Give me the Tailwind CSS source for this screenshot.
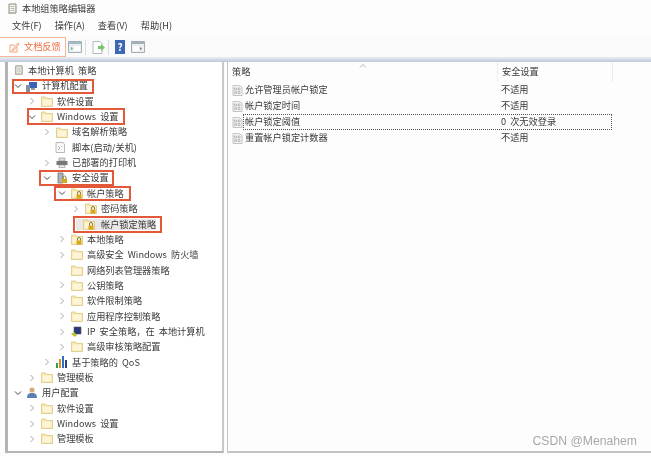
<!DOCTYPE html>
<html lang="zh-CN">
<head>
  <meta charset="UTF-8" />
  <title>本地组策略编辑器</title>
  <script src="https://cdn.jsdelivr.net/npm/@tailwindcss/browser@4"></script>
</head>
<body class="bg-white">
  <svg class="hidden">
    <symbol id="folder" viewBox="0 0 12 11">
      <path d="M.5 2.500V1h4l1 1.500h6v8H.5z" fill="#f8e6ab" stroke="#dcc680" stroke-width=".8"/>
      <path d="M1.500 3.500h9v6h-9z" fill="#fdf5d6"/>
    </symbol>
    <symbol id="lockfolder" viewBox="0 0 12 11">
      <path d="M.5 2.500V1h4l1 1.500h6v8H.5z" fill="#f8e6ab" stroke="#dcc680" stroke-width=".8"/>
      <path d="M1.500 3.500h9v6h-9z" fill="#fdf5d6"/>
      <path d="M5.500 6.500h5v4h-5z" fill="#d8a818"/>
      <path d="M6.500 6.500V5a1.500 1.500 0 0 1 3 0v1.500" fill="none" stroke="#8a7a3a"/>
    </symbol>
    <symbol id="right" viewBox="0 0 8 8">
      <path d="M2.500 1l3 3-3 3" fill="none" stroke="#a8a8a8" stroke-width="1"/>
    </symbol>
    <symbol id="down" viewBox="0 0 8 8">
      <path d="M1 2.500l3 3 3-3" fill="none" stroke="#444" stroke-width="1"/>
    </symbol>
    <symbol id="policy" viewBox="0 0 11 11">
      <path d="M1 .5h6l3 2v8H1z" fill="#f6f6f6" stroke="#b4b8bc" stroke-width=".8"/>
      <path d="M2.500 3h2v2h-2zM6 3h2v2H6zM2.500 6.500h2v2h-2zM6 6.500h2v2H6z" fill="none" stroke="#a4a8ac" stroke-width=".7"/>
    </symbol>
    <symbol id="doc" viewBox="0 0 12 12">
      <path d="M3 1h7v9H3z" fill="#f4f4ee" stroke="#8b8b80"/>
      <path d="M1 11h7l2-1H3z" fill="#b8b8a8"/>
      <path d="M4.500 3.500h4M4.500 5.500h4M4.500 7.500h4" stroke="#a0a090" stroke-width=".7"/>
    </symbol>
  </svg>

  <div class="h-[456px] w-[651px] overflow-hidden bg-[#fdfdfd] text-[9.2px] leading-none text-[#3a3a3a] blur-[0.3px] [word-spacing:2px] [font-family:'Noto_Sans_CJK_SC','Liberation_Sans',sans-serif]">
    <!-- title -->
    <div class="flex h-[18px] items-center gap-[4px] pl-[6px]">
      <svg class="h-[12px] w-[12px]"><use href="#doc"/></svg>
      <span>本地组策略编辑器</span>
    </div>
    <!-- menu -->
    <div class="flex h-[19px] items-center gap-[13px] pb-[3px] pl-[12px]">
      <span>文件(F)</span><span>操作(A)</span><span>查看(V)</span><span>帮助(H)</span>
    </div>
    <!-- toolbar -->
    <div class="flex h-[20px] items-center bg-[#fafafa]">
      <div class="flex h-[20px] w-[66px] items-center gap-[4px] border-y border-r border-[#f5b795] bg-white pl-[9px] text-[#ee6f42]">
        <svg class="h-[11px] w-[11px]" viewBox="0 0 11 11"><path d="M1 3h5M1 3v7h7V5M4 7l5-6 1 1-5 6-2 .5z" fill="none" stroke="#f19a72" stroke-width=".9"/></svg>
        <span>文档反馈</span>
      </div>
      <svg class="ml-[2px] h-[12px] w-[14px]" viewBox="0 0 14 12"><path d="M.5.5h13v11H.5z" fill="#e6eef2" stroke="#a2b0b8"/><path d="M1 1h12v2H1z" fill="#a6b9c6"/><path d="M6 5h6v5H6z" fill="#fff"/><path d="M3 6l2 1.500L3 9z" fill="#6cb56c"/></svg>
      <div class="ml-[3px] h-[15px] w-px bg-[#d8dcdf]"></div>
      <svg class="ml-[6px] h-[13px] w-[14px]" viewBox="0 0 14 13"><path d="M1 .5h7l2 2v10H1z" fill="#fff" stroke="#b4b9bc"/><path d="M6 5h3V3l4 3.500L9 10V8H6z" fill="#7cc26e"/></svg>
      <div class="ml-[2px] h-[15px] w-px bg-[#d8dcdf]"></div>
      <div class="ml-[6px] flex h-[14px] w-[10px] items-center justify-center bg-[#3b69b6] text-[10px] font-bold text-white">?</div>
      <svg class="ml-[6px] h-[12px] w-[14px]" viewBox="0 0 14 12"><path d="M.5.5h13v11H.5z" fill="#eceef0" stroke="#a2aeb6"/><path d="M1 1h12v2H1z" fill="#a4b0b8"/><path d="M2 5h6v5H2z" fill="#fff"/><path d="M9 6l2 1.500L9 9z" fill="#6a7a84"/></svg>
    </div>
    <!-- panes -->
    <div class="h-[5px] bg-gradient-to-b from-[#eceff3] to-[#b9c8da]"></div>
    <div class="flex h-[391px]">
      <!-- tree -->
      <div class="ml-[5px] h-full w-[219px] border-x-2 border-b-2 border-l-[3px] border-[#b4b4b4] border-r-[#c8c8c8] bg-white pt-[1px]">
        <div class="flex h-[15.35px] items-center pl-[5px]"><svg class="mr-[4px] h-[11px] w-[11px]"><use href="#doc"/></svg><span>本地计算机 策略</span></div>

        <div class="flex h-[15.35px] items-center pl-[6px]"><span class="relative flex items-center"><svg class="h-[8px] w-[8px]"><use href="#down"/></svg><svg class="ml-[4px] mr-[4px] h-[11px] w-[12px]" viewBox="0 0 12 11"><path d="M3 1h8v6H3z" fill="#3d62b8"/><path d="M5 7h4v2H5z" fill="#999"/><path d="M0 4h4v7H0z" fill="#8090a0"/></svg><span>计算机配置</span><span class="absolute -left-[2px] -right-[6px] -top-[2px] -bottom-[2px] border-2 border-[#e4583a]"></span></span></div>
        <div class="flex h-[15.35px] items-center pl-[20px]"><svg class="h-[8px] w-[8px]"><use href="#right"/></svg><svg class="ml-[5px] mr-[4px] h-[11px] w-[12px]"><use href="#folder"/></svg><span>软件设置</span></div>
        <div class="flex h-[15.35px] items-center pl-[20px]"><span class="relative flex items-center"><svg class="h-[8px] w-[8px]"><use href="#down"/></svg><svg class="ml-[5px] mr-[4px] h-[11px] w-[12px]"><use href="#folder"/></svg><span>Windows 设置</span><span class="absolute -left-[1px] -right-[6px] -top-[3px] -bottom-[3px] border-2 border-[#e4583a]"></span></span></div>

        <div class="flex h-[15.35px] items-center pl-[35px]"><svg class="h-[8px] w-[8px]"><use href="#right"/></svg><svg class="ml-[5px] mr-[4px] h-[11px] w-[12px]"><use href="#folder"/></svg><span>域名解析策略</span></div>
        <div class="flex h-[15.35px] items-center pl-[46px]"><svg class="mr-[6px] h-[11px] w-[12px]" viewBox="0 0 12 11"><path d="M2 .5h7l1.500 2v8H2z" fill="#f8f8f8" stroke="#a8a8a8" stroke-width=".8"/><path d="M4 4l2 2-2 2M7 4l1 1" fill="none" stroke="#a0a0a0" stroke-width=".8"/></svg><span>脚本(启动/关机)</span></div>
        <div class="flex h-[15.35px] items-center pl-[35px]"><svg class="h-[8px] w-[8px]"><use href="#right"/></svg><svg class="ml-[5px] mr-[4px] h-[11px] w-[12px]" viewBox="0 0 12 11"><path d="M3 1h6v3H3z" fill="#ddd" stroke="#888" stroke-width=".6"/><path d="M.5 4h11v4H.5z" fill="#777"/><path d="M3 8h6v2.500H3z" fill="#eee" stroke="#888" stroke-width=".6"/></svg><span>已部署的打印机</span></div>
        <div class="flex h-[15.35px] items-center pl-[35px]"><span class="relative flex items-center"><svg class="h-[8px] w-[8px]"><use href="#down"/></svg><svg class="ml-[5px] mr-[4px] h-[12px] w-[12px]" viewBox="0 0 12 12"><path d="M2 1h5v10H2z" fill="#aeb4ba" stroke="#666" stroke-width=".7"/><path d="M6 7h5v4H6z" fill="#d8a818"/><path d="M7 7V5.500a1.500 1.500 0 0 1 3 0V7" fill="none" stroke="#8a7a3a"/></svg><span>安全设置</span><span class="absolute -left-[4px] -right-[5px] -top-[2px] -bottom-[2px] border-2 border-[#e4583a]"></span></span></div>

        <div class="flex h-[15.35px] items-center pl-[50px]"><span class="relative flex items-center"><svg class="h-[8px] w-[8px]"><use href="#down"/></svg><svg class="ml-[5px] mr-[4px] h-[11px] w-[12px]"><use href="#lockfolder"/></svg><span>帐户策略</span><span class="absolute -left-[4px] -right-[7px] -top-[2px] -bottom-[2px] border-2 border-[#e4583a]"></span></span></div>
        <div class="flex h-[15.35px] items-center pl-[64px]"><svg class="h-[8px] w-[8px]"><use href="#right"/></svg><svg class="ml-[5px] mr-[4px] h-[11px] w-[12px]"><use href="#lockfolder"/></svg><span>密码策略</span></div>
        <div class="flex h-[15.35px] items-center pl-[68px]"><span class="relative flex items-center bg-[#e8e8e8]"><svg class="ml-[7px] mr-[6px] h-[11px] w-[12px]"><use href="#lockfolder"/></svg><span>帐户锁定策略</span><span class="absolute -inset-y-[3px] -left-[3px] -right-[6px] border-2 border-[#e4583a]"></span></span></div>

        <div class="flex h-[15.35px] items-center pl-[50px]"><svg class="h-[8px] w-[8px]"><use href="#right"/></svg><svg class="ml-[5px] mr-[4px] h-[11px] w-[12px]"><use href="#lockfolder"/></svg><span>本地策略</span></div>
        <div class="flex h-[15.35px] items-center pl-[50px]"><svg class="h-[8px] w-[8px]"><use href="#right"/></svg><svg class="ml-[5px] mr-[4px] h-[11px] w-[12px]"><use href="#folder"/></svg><span>高级安全 Windows 防火墙</span></div>
        <div class="flex h-[15.35px] items-center pl-[63px]"><svg class="mr-[4px] h-[11px] w-[12px]"><use href="#folder"/></svg><span>网络列表管理器策略</span></div>
        <div class="flex h-[15.35px] items-center pl-[50px]"><svg class="h-[8px] w-[8px]"><use href="#right"/></svg><svg class="ml-[5px] mr-[4px] h-[11px] w-[12px]"><use href="#folder"/></svg><span>公钥策略</span></div>
        <div class="flex h-[15.35px] items-center pl-[50px]"><svg class="h-[8px] w-[8px]"><use href="#right"/></svg><svg class="ml-[5px] mr-[4px] h-[11px] w-[12px]"><use href="#folder"/></svg><span>软件限制策略</span></div>
        <div class="flex h-[15.35px] items-center pl-[50px]"><svg class="h-[8px] w-[8px]"><use href="#right"/></svg><svg class="ml-[5px] mr-[4px] h-[11px] w-[12px]"><use href="#folder"/></svg><span>应用程序控制策略</span></div>
        <div class="flex h-[15.35px] items-center pl-[50px]"><svg class="h-[8px] w-[8px]"><use href="#right"/></svg><svg class="ml-[5px] mr-[4px] h-[12px] w-[12px]" viewBox="0 0 12 12"><path d="M3 1h7v7H3z" fill="#2a3a78" stroke="#555" stroke-width=".6"/><path d="M0 8l3-2 3 3-2 2z" fill="#b8c030"/></svg><span>IP 安全策略，在 本地计算机</span></div>
        <div class="flex h-[15.35px] items-center pl-[50px]"><svg class="h-[8px] w-[8px]"><use href="#right"/></svg><svg class="ml-[5px] mr-[4px] h-[11px] w-[12px]"><use href="#folder"/></svg><span>高级审核策略配置</span></div>

        <div class="flex h-[15.35px] items-center pl-[35px]"><svg class="h-[8px] w-[8px]"><use href="#right"/></svg><svg class="ml-[4px] mr-[4px] h-[12px] w-[13px]" viewBox="0 0 13 12"><path d="M1 7h2v5H1z" fill="#2f9e44"/><path d="M4 3h2v9H4z" fill="#e08a1e"/><path d="M7 0h2v12H7z" fill="#2f6fc0"/><path d="M10 4h2v8h-2z" fill="#27408b"/></svg><span>基于策略的 QoS</span></div>
        <div class="flex h-[15.35px] items-center pl-[20px]"><svg class="h-[8px] w-[8px]"><use href="#right"/></svg><svg class="ml-[5px] mr-[4px] h-[11px] w-[12px]"><use href="#folder"/></svg><span>管理模板</span></div>
        <div class="flex h-[15.35px] items-center pl-[6px]"><svg class="h-[8px] w-[8px]"><use href="#down"/></svg><svg class="ml-[4px] mr-[4px] h-[11px] w-[12px]" viewBox="0 0 12 11"><circle cx="6" cy="3" r="2.500" fill="#d8a878"/><path d="M1 11c0-4 2-5 5-5s5 1 5 5z" fill="#5a7fb0"/></svg><span>用户配置</span></div>
        <div class="flex h-[15.35px] items-center pl-[20px]"><svg class="h-[8px] w-[8px]"><use href="#right"/></svg><svg class="ml-[5px] mr-[4px] h-[11px] w-[12px]"><use href="#folder"/></svg><span>软件设置</span></div>
        <div class="flex h-[15.35px] items-center pl-[20px]"><svg class="h-[8px] w-[8px]"><use href="#right"/></svg><svg class="ml-[5px] mr-[4px] h-[11px] w-[12px]"><use href="#folder"/></svg><span>Windows 设置</span></div>
        <div class="flex h-[15.35px] items-center pl-[20px]"><svg class="h-[8px] w-[8px]"><use href="#right"/></svg><svg class="ml-[5px] mr-[4px] h-[11px] w-[12px]"><use href="#folder"/></svg><span>管理模板</span></div>
      </div>

      <!-- list -->
      <div class="ml-[3px] h-full flex-1 border-b-2 border-l border-[#c4c4c4] bg-[#fdfdfd]">
        <div class="relative flex h-[20px] items-center">
          <span class="w-[269px] pl-[4px]">策略</span>
          <span class="flex h-full w-[116px] items-center border-x border-[#ececec] pl-[4px]">安全设置</span>
          <svg class="absolute left-[131px] top-[2px] h-[4px] w-[8px]" viewBox="0 0 8 4"><path d="M1 3.500L4 .5l3 3" fill="none" stroke="#a0a0a0" stroke-width=".8"/></svg>
        </div>
        <div class="flex h-[16px] items-center pl-[4px]"><svg class="mr-[2px] h-[11px] w-[11px]"><use href="#policy"/></svg><span class="w-[256px]">允许管理员帐户锁定</span><span>不适用</span></div>
        <div class="flex h-[16px] items-center pl-[4px]"><svg class="mr-[2px] h-[11px] w-[11px]"><use href="#policy"/></svg><span class="w-[256px]">帐户锁定时间</span><span>不适用</span></div>
        <div class="flex h-[16px] items-center pl-[4px]"><svg class="h-[11px] w-[11px]"><use href="#policy"/></svg><span class="flex h-full w-[369px] items-center border border-dotted border-[#555] pl-[1px]"><span class="w-[256px]">帐户锁定阈值</span><span>0 次无效登录</span></span></div>
        <div class="flex h-[16px] items-center pl-[4px]"><svg class="mr-[2px] h-[11px] w-[11px]"><use href="#policy"/></svg><span class="w-[256px]">重置帐户锁定计数器</span><span>不适用</span></div>
        <div class="absolute right-[14px] top-[435px] text-[12.2px] text-[#a8a8a8] [word-spacing:0] [font-family:'Liberation_Sans',sans-serif]">CSDN @Menahem</div>
      </div>
    </div>
  </div>
</body>
</html>
